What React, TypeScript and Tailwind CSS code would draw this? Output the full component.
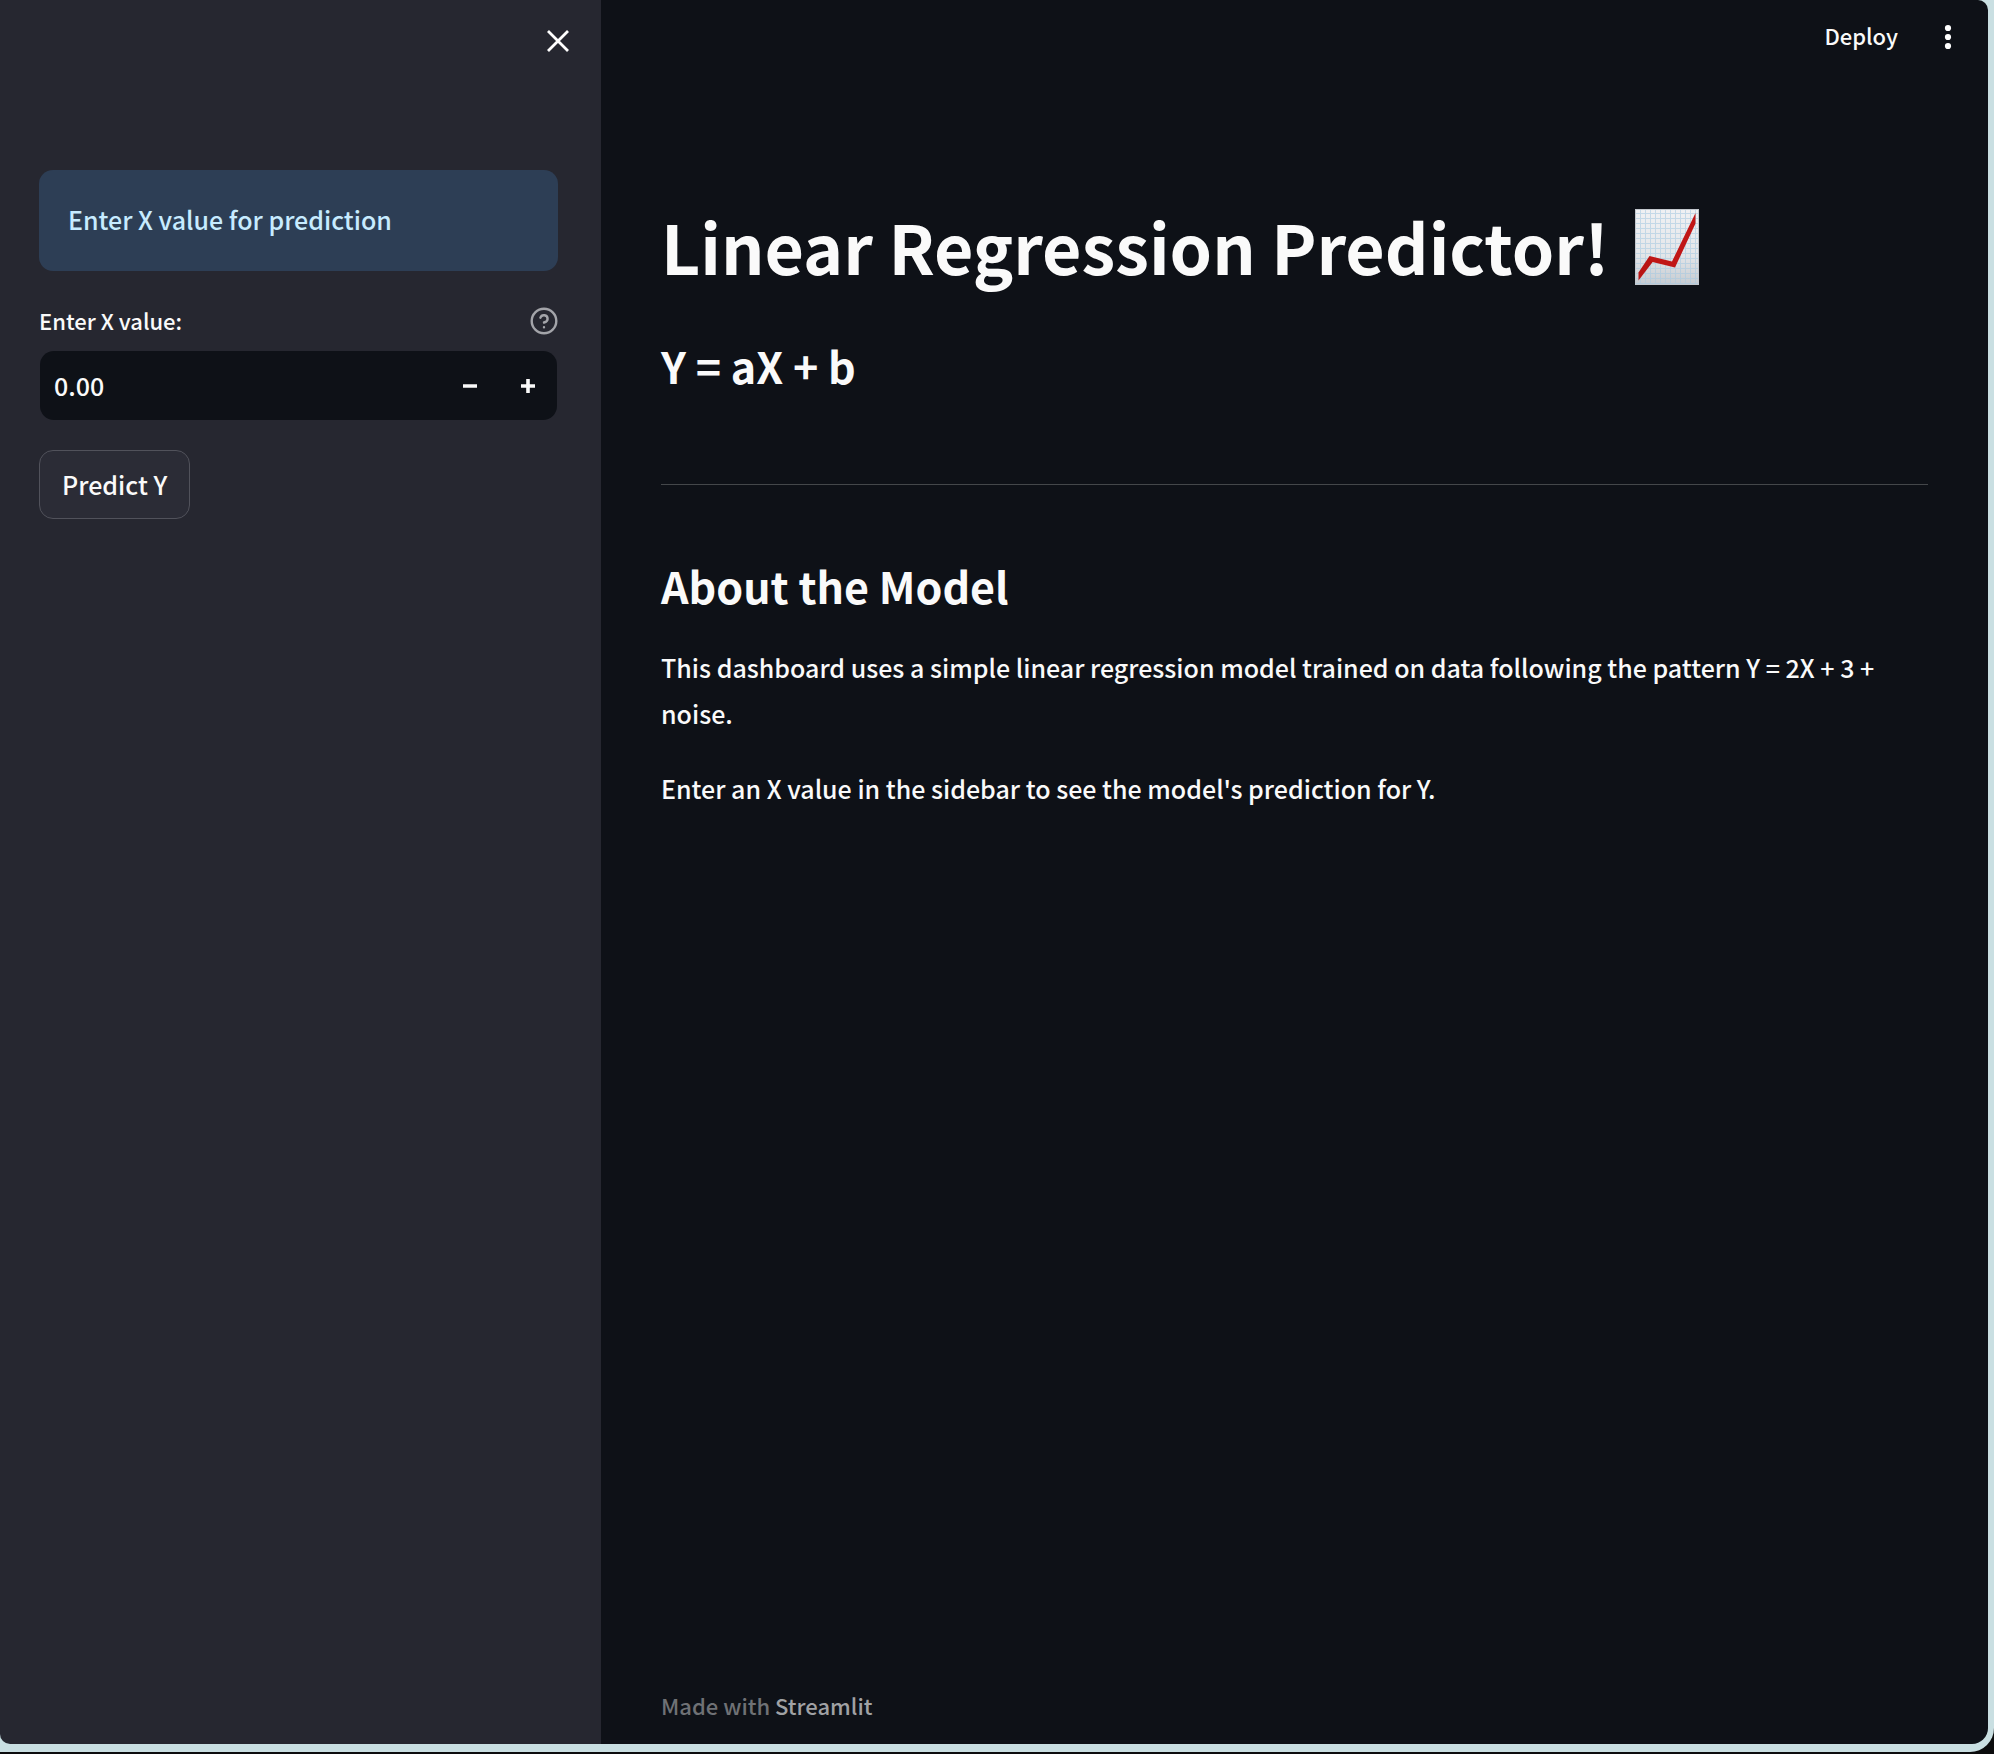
import { useState } from "react";

const buttonFocus = "focus-visible:outline-2 focus-visible:outline-red-400";

function ChartIcon() {
  const rows = Array.from({ length: 15 }, (_, i) => 4 + i * 5);
  const cols = Array.from({ length: 12 }, (_, i) => 5 + i * 5);
  return (
    <svg viewBox="0 0 64 76" className="h-19 w-16 shrink-0" role="img" aria-label="Chart increasing">
      <defs>
        <linearGradient id="paper" x1="0" y1="0" x2="0" y2="1">
          <stop offset="0" stopColor="#f0f1f3" />
          <stop offset="0.6" stopColor="#e4e6e9" />
          <stop offset="1" stopColor="#c6cbd0" />
        </linearGradient>
      </defs>
      <rect width="64" height="76" fill="url(#paper)" />
      <g stroke="#a9cbe2" strokeWidth="1" opacity="0.6">
        {rows.map((y) => (
          <path key={y} d={`M1 ${y}.5H63`} />
        ))}
        {cols.map((x) => (
          <path key={x} d={`M${x}.5 1V75`} />
        ))}
      </g>
      <rect x="0.5" y="0.5" width="63" height="75" fill="none" stroke="#c3c8ce" />
      <path d="M3.5 63.5 14.5 47 18 52.5 3.5 71.5Z" fill="#b81414" />
      <path d="M14.5 47 37 52.5 60.5 4V14.5L40 58.5 15.5 52.5Z" fill="#c01616" />
    </svg>
  );
}

function Sidebar() {
  const [value, setValue] = useState("0.00");
  const step = (d: number) => setValue((v) => ((Number(v) || 0) + d).toFixed(2));
  return (
    <aside className="flex w-[601px] shrink-0 flex-col bg-[#262730] pr-[43px] pl-[39px]">
      <div className="-mr-[17px] flex h-[170px] items-start justify-end pt-6">
        <button type="button" aria-label="Close sidebar" className={`p-0.5 ${buttonFocus}`}>
          <svg viewBox="0 0 30 30" className="size-[30px]" stroke="#fff" strokeWidth="2.8" aria-hidden="true">
            <path d="M5 5 25 25M25 5 5 25" />
          </svg>
        </button>
      </div>
      <div role="status" className="flex h-[101px] items-center rounded-[14px] bg-[#2d3e55] px-[29px] pb-0.5 text-[25px] text-[#c7ebff]">
        Enter X value for prediction
      </div>
      <div className="mt-[34px] flex h-8 items-center justify-between">
        <label htmlFor="x-value" className="pb-0.5 text-[22px]">
          Enter X value:
        </label>
        <button type="button" aria-label="Help" className={buttonFocus}>
          <svg viewBox="0 0 28 28" className="size-7" fill="none" stroke="#a3a4a9" strokeWidth="2.4" strokeLinecap="round" strokeLinejoin="round" aria-hidden="true">
            <circle cx="14" cy="14" r="12.3" />
            <path d="M10.4 10.7a3.7 3.7 0 0 1 7.2 1.2c0 2.4-3.6 3.6-3.6 3.6M14 20.2v.1" />
          </svg>
        </button>
      </div>
      <div className="mx-px mt-3.5 flex h-[69px] overflow-hidden rounded-[14px] bg-[#0e1117]">
        <input
          id="x-value"
          inputMode="decimal"
          value={value}
          onChange={(e) => setValue(e.target.value)}
          className="min-w-0 flex-1 bg-transparent px-3.5 text-[25px] font-medium outline-none"
        />
        <button type="button" aria-label="Decrease" onClick={() => step(-0.01)} className="grid w-[58px] place-items-center">
          <svg viewBox="0 0 14 14" className="size-3.5" aria-hidden="true">
            <path d="M0 7H14" stroke="#fafafa" strokeWidth="3.6" />
          </svg>
        </button>
        <button type="button" aria-label="Increase" onClick={() => step(0.01)} className="grid w-[58px] place-items-center">
          <svg viewBox="0 0 14 14" className="size-3.5" aria-hidden="true">
            <path d="M0 7H14M7 0V14" stroke="#fafafa" strokeWidth="3.6" />
          </svg>
        </button>
      </div>
      <button type="button" className={`mt-[30px] h-[69px] self-start rounded-[14px] border border-[#51525b] bg-[#2b2c36] px-[22px] text-[25px] font-medium ${buttonFocus}`}>
        Predict Y
      </button>
    </aside>
  );
}

export default function App() {
  return (
    <div className="flex min-h-screen flex-col bg-[#0b0c0d] pb-0.5 font-['Noto_Sans_CJK_SC',sans-serif] font-medium text-[#fafafa]">
      <div className="flex flex-1 rounded-br-[24px] bg-[#c9dfe2] pr-1.5 pb-2">
        <div className="flex flex-1 overflow-hidden rounded-tr-[10px] rounded-br-[16px] rounded-bl-[10px]">
          <Sidebar />
          <main className="flex min-w-0 flex-1 flex-col bg-[#0e1117] px-[60px]">
            <header className="-mr-8 flex h-[74px] items-center justify-end gap-[38px]">
              <button type="button" className={`pb-1 text-[22px] font-medium ${buttonFocus}`}>
                Deploy
              </button>
              <button type="button" aria-label="Main menu" className={buttonFocus}>
                <svg viewBox="0 0 24 28" className="h-7 w-6" fill="#fff" aria-hidden="true">
                  <circle cx="12" cy="5" r="3.1" />
                  <circle cx="12" cy="14" r="3.1" />
                  <circle cx="12" cy="23" r="3.1" />
                </svg>
              </button>
            </header>
            <h1 className="mt-[125px] flex h-[95px] items-center gap-[26px] text-[68px] leading-[90px] font-bold">
              <span className="pb-0.5">Linear Regression Predictor!</span>
              <ChartIcon />
            </h1>
            <h2 className="mt-[41px] text-[43px] leading-[60px] font-bold">Y = aX + b</h2>
            <hr className="mt-[89px] border-[#44474a]" />
            <h2 className="mt-[70px] text-[43px] leading-[60px] font-bold">About the Model</h2>
            <p className="mt-[29px] text-[25px] leading-[46px]">
              This dashboard uses a simple linear regression model trained on data following the pattern Y = 2X + 3 + noise.
            </p>
            <p className="mt-[29px] text-[25px] leading-[46px]">Enter an X value in the sidebar to see the model's prediction for Y.</p>
            <footer className="mt-auto pb-[19px] text-[22px] leading-10 text-[#6f7175]">
              Made with{" "}
              <a href="https://streamlit.io" className="text-[#a0a1a4]">
                Streamlit
              </a>
            </footer>
          </main>
        </div>
      </div>
    </div>
  );
}
